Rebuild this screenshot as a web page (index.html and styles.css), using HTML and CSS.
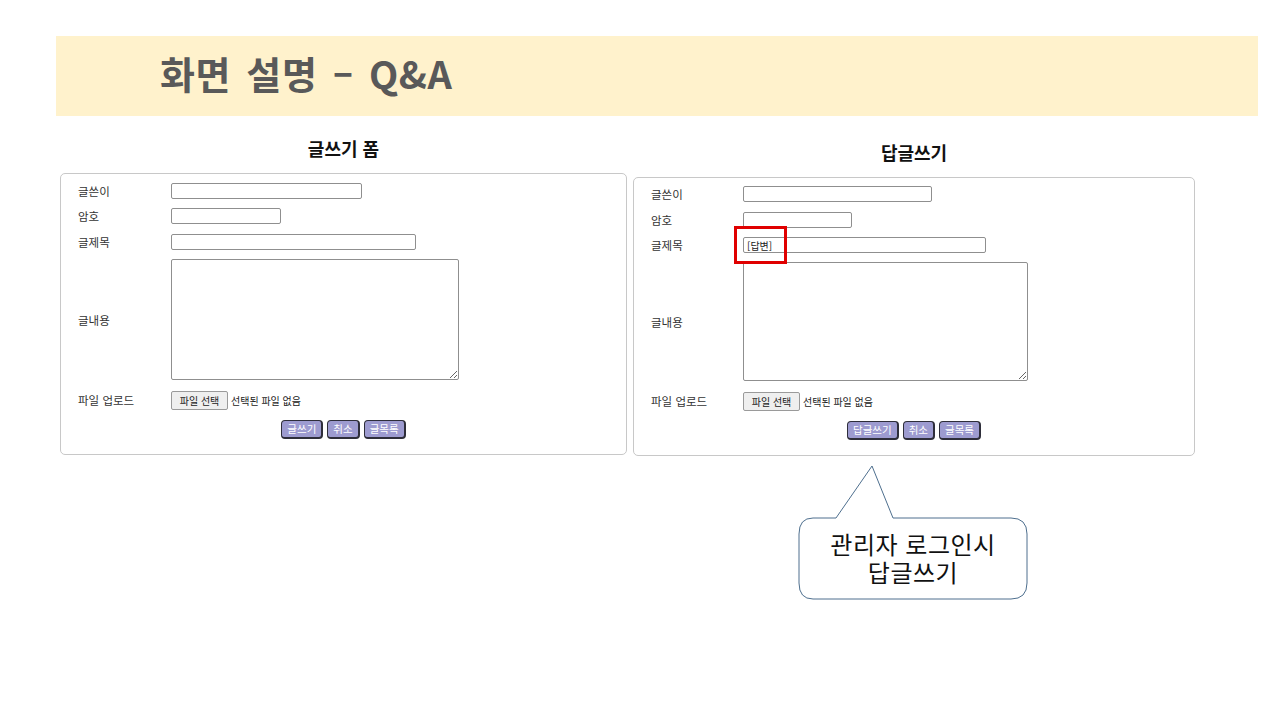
FILE: index.html
```html
<!DOCTYPE html>
<html lang="ko">
<head>
<meta charset="utf-8">
<title>화면 설명 – Q&amp;A</title>
<link rel="stylesheet" href="styles.css">
</head>
<body>
<div class="slide">
  <header class="title-band">
    <h1 class="title">화면 설명 – Q&amp;A</h1>
  </header>

  <div class="panels">
    <section class="panel panel-left">
      <h2 class="panel-heading">글쓰기 폼</h2>
      <div class="form-box">
        <div class="form-grid">
          <div class="label">글쓴이</div>
          <div class="field"><input class="inp w-name-l" type="text"></div>
          <div class="label">암호</div>
          <div class="field"><input class="inp w-pw-l" type="password"></div>
          <div class="label">글제목</div>
          <div class="field"><input class="inp w-title-l" type="text"></div>
          <div class="label">글내용</div>
          <div class="field"><textarea class="ta ta-l"></textarea></div>
          <div class="label">파일 업로드</div>
          <div class="field file-field"><span class="file-btn">파일 선택</span><span class="file-none">선택된 파일 없음</span></div>
        </div>
        <div class="actions">
          <button class="act">글쓰기</button>
          <button class="act">취소</button>
          <button class="act">글목록</button>
        </div>
      </div>
    </section>

    <section class="panel panel-right">
      <h2 class="panel-heading">답글쓰기</h2>
      <div class="form-box form-box-r">
        <div class="form-grid form-grid-r">
          <div class="label">글쓴이</div>
          <div class="field"><input class="inp w-name-r" type="text"></div>
          <div class="label">암호</div>
          <div class="field"><input class="inp w-pw-r" type="password"></div>
          <div class="label">글제목</div>
          <div class="field highlight-host"><input class="inp w-title-r" type="text" value="[답변]"><span class="highlight"></span></div>
          <div class="label">글내용</div>
          <div class="field"><textarea class="ta ta-r"></textarea></div>
          <div class="label">파일 업로드</div>
          <div class="field file-field"><span class="file-btn">파일 선택</span><span class="file-none">선택된 파일 없음</span></div>
        </div>
        <div class="actions">
          <button class="act">답글쓰기</button>
          <button class="act">취소</button>
          <button class="act">글목록</button>
        </div>
      </div>
    </section>
  </div>

  <div class="callout">
    <svg class="callout-shape" width="234" height="138" viewBox="0 0 234 138">
      <path d="M17 54 L40 54 L76 2 L97 54 L215 54 Q231 54 231 70 L231 119 Q231 135 215 135 L17 135 Q3 135 3 119 L3 70 Q3 54 17 54 Z" fill="#ffffff" stroke="#4e6f8e" stroke-width="1"/>
    </svg>
    <div class="callout-text">
      <div class="callout-line">관리자 로그인시</div>
      <div class="callout-line">답글쓰기</div>
    </div>
  </div>
</div>
</body>
</html>
```

FILE: styles.css
```css
* { box-sizing: border-box; }

html, body {
  margin: 0;
  padding: 0;
  background: #ffffff;
}

body {
  font-family: "Noto Sans CJK KR", "Noto Sans", "Liberation Sans", sans-serif;
  color: #333333;
}

.slide {
  position: relative;
  width: 1280px;
  height: 720px;
  overflow: hidden;
  padding-top: 36px;
}

.title-band {
  margin-left: 56px;
  width: 1202px;
  height: 80px;
  background: #fff2cc;
  display: flex;
  align-items: center;
  padding-left: 104px;
}

.title {
  margin: 0;
  font-size: 38px;
  font-weight: 700;
  color: #595959;
  letter-spacing: 0.6px;
  word-spacing: 4px;
  line-height: 1;
  padding-bottom: 6px;
}

.panels {
  display: flex;
  align-items: flex-start;
  gap: 6px;
  margin-left: 60px;
  margin-top: 17px;
}

.panel-left { width: 567px; }
.panel-right { width: 562px; margin-top: 4px; }

.panel-heading {
  margin: 0;
  height: 40px;
  font-size: 18px;
  font-weight: 700;
  color: #111111;
  text-align: center;
  line-height: 30px;
}

.form-box {
  border: 1px solid #c8c8c8;
  border-radius: 5px;
  padding: 9px 0 16px 17px;
  height: 282px;
}

.form-box-r { padding-top: 8px; height: 279px; }

.form-grid {
  display: grid;
  grid-template-columns: 93px auto;
  grid-template-rows: 16px 16px 17px 121px 21px;
  row-gap: 9px;
  align-items: center;
}

.form-grid-r {
  grid-template-columns: 92px auto;
  grid-template-rows: 16px 17px 16px 119px 21px;
}

.label {
  font-size: 11.5px;
  color: #333333;
  line-height: 16px;
  white-space: nowrap;
}

.field {
  display: flex;
  align-items: center;
  height: 100%;
}

.inp {
  height: 16px;
  border: 1px solid #8f8f8f;
  border-radius: 2px;
  padding: 0 3px;
  font-family: "Noto Sans CJK KR", sans-serif;
  font-size: 10px;
  color: #222222;
  background: #ffffff;
  outline: none;
}

.form-grid .field:nth-child(6) { align-items: flex-end; }

.w-name-l { width: 191px; }
.w-pw-l { width: 110px; }
.w-title-l { width: 245px; }
.w-name-r { width: 189px; }
.w-pw-r { width: 109px; }
.w-title-r { width: 243px; }

.ta {
  border: 1px solid #8f8f8f;
  border-radius: 2px;
  height: 100%;
  resize: both;
  background: #ffffff;
}
.ta-l { width: 288px; }
.ta-r { width: 285px; }

.highlight-host { position: relative; }

.highlight {
  position: absolute;
  left: -9px;
  top: -11px;
  width: 53px;
  height: 38px;
  border: 3px solid #e00000;
}

.file-field { gap: 3px; align-items: flex-end; }

.file-btn {
  display: inline-flex;
  align-items: center;
  justify-content: center;
  width: 57px;
  height: 19px;
  background: #efefef;
  border: 1px solid #9a9a9a;
  border-radius: 2px;
  font-size: 10px;
  color: #222222;
}

.file-none {
  font-size: 10px;
  color: #222222;
  line-height: 19px;
}

.actions {
  display: flex;
  justify-content: center;
  gap: 4px;
  margin-top: 10px;
  margin-left: -17px;
}

.act {
  height: 19px;
  padding: 0 5px;
  border: 1px solid #2e2e3a;
  border-right-width: 2px;
  border-bottom-width: 2px;
  border-radius: 4px;
  background: #9d9bd0;
  color: #ffffff;
  font-family: "Noto Sans CJK KR", sans-serif;
  font-size: 10.5px;
  line-height: 16px;
}

.callout {
  position: absolute;
  left: 796px;
  top: 464px;
  width: 234px;
  height: 138px;
}

.callout-shape {
  position: absolute;
  left: 0;
  top: 0;
}

.callout-text {
  position: absolute;
  left: 0;
  top: 66px;
  width: 234px;
  text-align: center;
  font-size: 24px;
  color: #111111;
}

.callout-line {
  height: 28px;
  line-height: 28px;
  letter-spacing: 0.5px;
}
```
